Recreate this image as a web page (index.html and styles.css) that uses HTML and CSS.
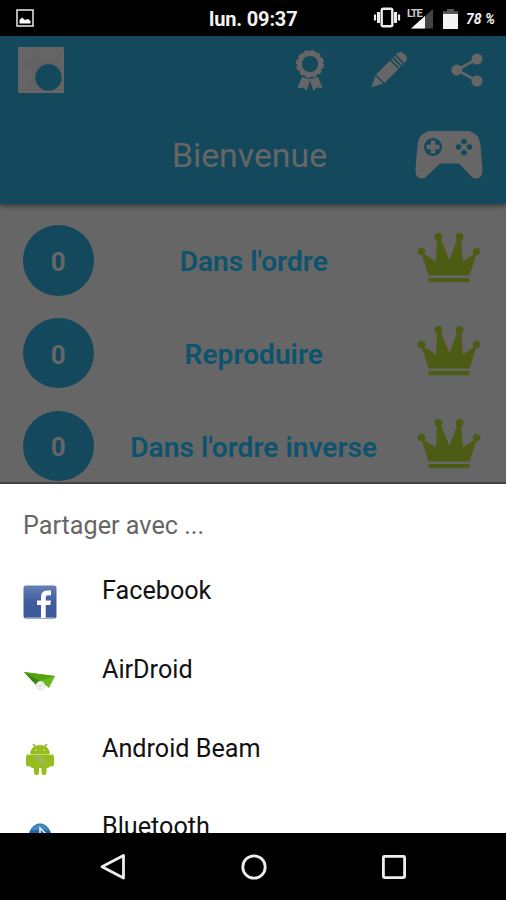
FILE: index.html
```
<!DOCTYPE html>
<html lang="fr">
<head>
<meta charset="utf-8">
<title>Bienvenue</title>
<link rel="stylesheet" href="styles.css">
</head>
<body>
<svg class="defs" width="0" height="0" aria-hidden="true">
  <symbol id="crown" viewBox="0 0 64 52">
    <g fill="currentColor"><circle cx="4.500" cy="19.500" r="3.800"/><circle cx="21.500" cy="5" r="3.900"/><circle cx="42.500" cy="5" r="3.900"/><circle cx="59.500" cy="19.500" r="3.800"/>
    <path d="M4 20L19 29.500L20 5H23L32.500 28L41 5H44L46 29.500L60 20L52.500 43.500H11.500Z"/><rect x="11.500" y="46" width="41" height="4.300" rx=".8"/></g>
  </symbol>
</svg>
<div class="phone">
  <div class="statusbar">
    <svg class="shot" width="18" height="18" viewBox="0 0 18 18"><rect x="1" y="1" width="16" height="16" fill="none" stroke="#ddd" stroke-width="1.600"/><path d="M3.500 14.500V11L6 8.500L9 11L12 10L14.500 12V14.500Z" fill="#fff"/></svg>
    <span class="clock">lun. 09:37</span>
    <svg class="indicators" width="88" height="26" viewBox="0 0 88 26">
      <g fill="none" stroke="#eee"><rect x="8.700" y="3.700" width="10.600" height="17.600" rx="1.500" stroke-width="2.400"/><path d="M5.500 7v11M22.500 7v11" stroke-width="3"/><path d="M2 9.500v6M26 9.500v6" stroke-width="2.200"/></g>
      <path d="M60 4V23.500H38Z" fill="#444"/><path d="M52 11V23.500H38Z" fill="#f5f5f5"/>
      <path d="M74 4h7v2.200h4V9H70V6.200h4Z" fill="#555"/><path d="M70 9h15v15H70Z" fill="#f2f2f2"/>
    </svg>
    <span class="lte">LTE</span>
    <span class="percent">78 %</span>
  </div>
  <div class="header">
    <div class="toolbar">
      <svg class="logo" width="46" height="46" viewBox="0 0 46 46"><rect width="46" height="46" fill="#616263"/><g fill="#656565"><circle cx="3" cy="3" r="13"/><circle cx="30" cy="1" r="13"/><circle cx="2" cy="30" r="13"/></g><path d="M44.500 0V45H0" fill="none" stroke="#666" stroke-width="2"/><circle cx="30.500" cy="30.500" r="13.200" fill="#14485c"/></svg>
      <svg class="tool award" width="30" height="42" viewBox="0 0 30 42"><path d="M7 27L2.500 38L8.500 37.500L11.500 41L15 30.500L18.500 41L21.500 37.500L27.500 38L23 27Z" fill="#666"/><circle cx="15" cy="14" r="15" fill="#14485c"/><circle cx="15" cy="14" r="10.500" fill="none" stroke="#666" stroke-width="4.800"/><circle cx="15" cy="14" r="12.900" fill="none" stroke="#666" stroke-width="2.200" stroke-dasharray="4.300 2.450"/></svg>
      <svg class="tool pencil" width="38" height="38" viewBox="0 0 38 38"><g transform="translate(1.500 36.500) rotate(-45)" fill="#666"><path d="M0 0L11-5.500V5.500Z"/><path d="M12.500-6H32V6H12.500Z"/><path d="M33.500-6H35.500V6H33.500ZM37-6H39V6H37ZM40.500-6H42Q47-6 47 0T42 6H40.500Z"/></g></svg>
      <svg class="tool share" width="32" height="34" viewBox="0 0 32 34"><path d="M26 6L6 17L26 28" fill="none" stroke="#666" stroke-width="2.600"/><g fill="#666"><circle cx="26" cy="6" r="5.500"/><circle cx="5.700" cy="17" r="5.500"/><circle cx="26" cy="28" r="5.500"/></g></svg>
    </div>
    <h1>Bienvenue</h1>
    <svg class="gamepad" width="68" height="48" viewBox="0 0 68 48"><path d="M14 0H54Q64 2 65.500 14L67.500 38Q68 47 61.500 47.500Q58 48 55 44L44 32.500H25L13 44Q10 48 6.500 47.500Q0 47 .5 38L2.500 14Q4 2 14 0Z" fill="#666"/><circle cx="18" cy="16" r="9" fill="#14485c"/><path d="M15.800 9.500h4.400v4.300h4.300v4.400h-4.300v4.300h-4.400v-4.300h-4.300v-4.400h4.300Z" fill="#666"/><g fill="#14485c"><circle cx="49" cy="10.500" r="2.800"/><circle cx="43.500" cy="16" r="2.800"/><circle cx="54.500" cy="16" r="2.800"/><circle cx="49" cy="21.500" r="2.800"/></g></svg>
  </div>
  <div class="games">
    <div class="game"><span class="score">0</span><span class="name">Dans l'ordre</span><svg class="crown"><use href="#crown"/></svg></div>
    <div class="game"><span class="score">0</span><span class="name">Reproduire</span><svg class="crown"><use href="#crown"/></svg></div>
    <div class="game"><span class="score">0</span><span class="name">Dans l'ordre inverse</span><svg class="crown"><use href="#crown"/></svg></div>
  </div>
  <div class="sheet">
    <h2>Partager avec ...</h2>
    <div class="option">
      <svg width="34" height="34" viewBox="0 0 34 34"><defs><linearGradient id="fb" x2="0" y2="1"><stop stop-color="#6580b5"/><stop offset=".5" stop-color="#405c9d"/><stop offset="1" stop-color="#3c5a9c"/></linearGradient></defs><rect x=".5" y=".5" width="33" height="33" rx="2.500" fill="url(#fb)"/><path d="M2 32.500H32" stroke="#8093bf"/><path d="M18 33V20H14V15.500H18V12Q18 5.500 24 5.500H28V10.200H25Q22.700 10.200 22.700 12.500V15.500H28L27.300 20H22.700V33Z" fill="#fff"/></svg>
      <span>Facebook</span></div>
    <div class="option">
      <svg width="34" height="34" viewBox="0 0 34 34"><path d="M1 8L32 12L26 24L20 19L10 18Z" fill="#6ab820"/><path d="M1 8L32 12L17 17Z" fill="#55a413"/><path d="M1 8L17 17L13 21Z" fill="#3c8711"/><circle cx="17.500" cy="21.500" r="4.200" fill="#f4f7f1" stroke="#c9d3c4" stroke-width=".7"/><path d="M15 21l2 2 3-3" fill="none" stroke="#b5c8ac"/></svg>
      <span>AirDroid</span></div>
    <div class="option">
      <svg width="34" height="34" viewBox="0 0 34 34"><path d="M12 2L10 0M22 2L24 0" stroke="#7d942d" stroke-width="1.200" transform="translate(0 2)"/><g fill="#97bd1d"><path d="M7 12Q8 3 17 3T27 12Z"/><path d="M7 13H27V23Q27 26 24 26H10Q7 26 7 23Z"/><rect x="3" y="12.500" width="5" height="12" rx="2"/><rect x="26" y="12.500" width="5" height="12" rx="2"/><rect x="11" y="24" width="5" height="9" rx="2.300"/><rect x="18.500" y="24" width="5" height="9" rx="2.300"/></g><path d="M8 12.500H26" stroke="#c2d67d"/><circle cx="13" cy="8" r=".8" fill="#e5efc4"/><circle cx="21" cy="8" r=".8" fill="#e5efc4"/><path d="M13 14v5M13 15Q21 15 21 24M15 14Q20 17 16 22" fill="none" stroke="#9bb96b" stroke-width="1.800"/></svg>
      <span>Android Beam</span></div>
    <div class="option">
      <svg width="34" height="34" viewBox="0 0 34 34"><ellipse cx="17" cy="18.500" rx="12" ry="16" fill="#2269aa"/><path d="M8 9Q17-3 26 9Z" fill="#4788bd"/><path d="M11 13L22 24L17 29V7L22 12L11 23" fill="none" stroke="#eef4fa" stroke-width="1.500"/></svg>
      <span>Bluetooth</span></div>
  </div>
  <div class="navbar">
    <svg width="28" height="28" viewBox="0 0 28 28"><path d="M24.500 2.500V25L3 13.800Z"/></svg>
    <svg width="28" height="28" viewBox="0 0 28 28"><circle cx="14" cy="14" r="11.200"/></svg>
    <svg width="28" height="28" viewBox="0 0 28 28"><rect x="3.400" y="3.400" width="21.200" height="21.200" rx="1"/></svg>
  </div>
</div>
</body>
</html>
```
FILE: styles.css
```
* { box-sizing: border-box; }
body { margin: 0; font-family: Roboto, "Liberation Sans", sans-serif; }
svg { display: block; flex: none; }
.defs { position: absolute; }
.phone { width: 506px; height: 900px; display: flex; flex-direction: column; overflow: hidden; background: #666; }
.statusbar { position: relative; flex: none; height: 36px; background: #000; color: #f2f2f2; display: flex; align-items: center; padding-left: 16px; }
.clock { flex: none; margin-left: 175px; width: 92px; padding-top: 1px; font-size: 20px; font-weight: 700; letter-spacing: -0.150px; white-space: nowrap; }
.indicators { margin-left: 72px; }
.percent { flex: none; margin-left: 5px; padding-top: 1px; font-size: 14px; font-weight: 700; font-style: italic; white-space: nowrap; }
.lte { position: absolute; left: 407px; top: 8px; font-size: 11px; line-height: 12px; font-weight: 700; letter-spacing: -1px; color: #ccc; }
.header { flex: none; height: 168px; background: #14485c; box-shadow: 0 2px 5px rgba(0,0,0,.45); display: grid; grid-template-columns: 90px 1fr 90px; grid-template-rows: 70px 98px; align-items: center; }
.toolbar { grid-column: 1 / 4; height: 70px; display: flex; align-items: center; padding: 0 21px 2px 18px; }
.logo { margin-top: -1px; }
.award { margin-left: 231px; margin-top: 2px; }
.pencil { margin-left: 45px; }
.share { margin-left: 43px; margin-top: -1px; }
h1 { grid-column: 2; margin: 0; padding-top: 1px; text-align: center; font-size: 33.800px; font-weight: 400; line-height: 42px; color: #666; padding-right: 7px; }
.gamepad { margin-left: -1px; }
.games { flex: none; height: 278px; padding-top: 10px; overflow: hidden; }
.game { height: 92.800px; padding: 0 25px 0 23px; display: flex; align-items: center; }
.score { width: 70.500px; height: 70.500px; border-radius: 50%; background: #14485c; color: #666; display: flex; align-items: center; justify-content: center; font-size: 26px; font-weight: 700; padding-top: 3px; }
.name { flex: 1; text-align: center; font-size: 28.150px; font-weight: 600; color: #0d536d; padding: 3px 3px 0 0; white-space: nowrap; }
.crown { width: 64px; height: 52px; color: #4d5c14; margin-top: -4px; }
.sheet { flex: none; height: 351px; border-top: 2px solid #444; background: #fff; overflow: hidden; padding: 0 23px; }
h2 { margin: 0; height: 82px; padding-top: 26px; line-height: 32px; font-size: 25.200px; font-weight: 400; color: #666; }
.option { height: 78.700px; padding-top: 19px; display: flex; gap: 45px; font-size: 25.200px; line-height: 32px; color: #111; }
.option span { margin-top: -9.600px; }
.navbar { flex: 1; background: #000; display: flex; justify-content: space-between; align-items: center; padding: 0 98px 0 99px; }
.navbar path, .navbar circle, .navbar rect { fill: none; stroke: #eee; stroke-width: 2.800; stroke-linejoin: round; }
```
